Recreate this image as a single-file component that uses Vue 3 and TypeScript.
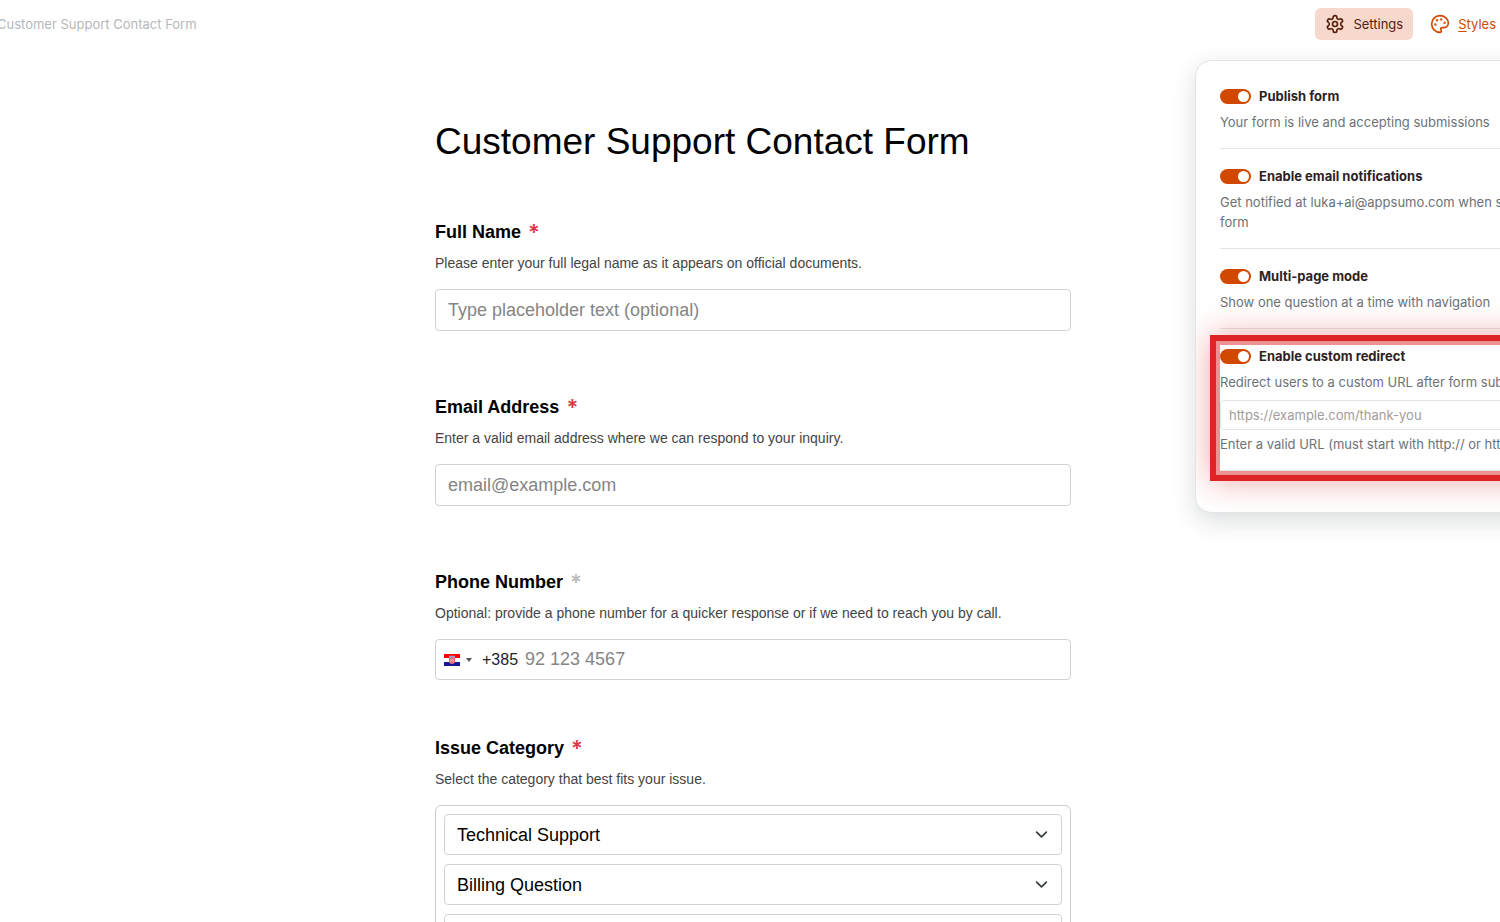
<script setup lang="ts">
import { ref } from 'vue'

interface TextField {
  id: string
  label: string
  hint: string
  placeholder: string
  type: string
}

interface Setting {
  id: string
  label: string
  hint: string
}

const title = 'Customer Support Contact Form'

const fields: TextField[] = [
  {
    id: 'full-name',
    label: 'Full Name',
    hint: 'Please enter your full legal name as it appears on official documents.',
    placeholder: 'Type placeholder text (optional)',
    type: 'text',
  },
  {
    id: 'email',
    label: 'Email Address',
    hint: 'Enter a valid email address where we can respond to your inquiry.',
    placeholder: 'email@example.com',
    type: 'email',
  },
]

const categories = ['Technical Support', 'Billing Question', 'Account Access']

const settings: Setting[] = [
  { id: 'publish', label: 'Publish form', hint: 'Your form is live and accepting submissions' },
  {
    id: 'notify',
    label: 'Enable email notifications',
    hint: 'Get notified at luka+ai@appsumo.com when someone submits your\nform',
  },
  { id: 'multipage', label: 'Multi-page mode', hint: 'Show one question at a time with navigation' },
]

const enabled = ref<Record<string, boolean>>({
  publish: true,
  notify: true,
  multipage: true,
  redirect: true,
})
const redirectUrl = ref('')
</script>

<template>
  <div class="shell">
    <header class="topbar">
      <span class="crumb">{{ title }}</span>
      <nav class="actions">
        <button type="button" class="action active">
          <svg class="icon" viewBox="0 0 24 24" aria-hidden="true">
            <path d="M12.22 2h-.44a2 2 0 0 0-2 2v.18a2 2 0 0 1-1 1.73l-.43.25a2 2 0 0 1-2 0l-.15-.08a2 2 0 0 0-2.73.73l-.22.38a2 2 0 0 0 .73 2.73l.15.1a2 2 0 0 1 1 1.72v.51a2 2 0 0 1-1 1.74l-.15.09a2 2 0 0 0-.73 2.73l.22.38a2 2 0 0 0 2.73.73l.15-.08a2 2 0 0 1 2 0l.43.25a2 2 0 0 1 1 1.73V20a2 2 0 0 0 2 2h.44a2 2 0 0 0 2-2v-.18a2 2 0 0 1 1-1.73l.43-.25a2 2 0 0 1 2 0l.15.08a2 2 0 0 0 2.73-.73l.22-.39a2 2 0 0 0-.73-2.73l-.15-.08a2 2 0 0 1-1-1.74v-.5a2 2 0 0 1 1-1.74l.15-.09a2 2 0 0 0 .73-2.73l-.22-.38a2 2 0 0 0-2.73-.73l-.15.08a2 2 0 0 1-2 0l-.43-.25a2 2 0 0 1-1-1.73V4a2 2 0 0 0-2-2z" />
            <circle cx="12" cy="12" r="3" />
          </svg>
          <span>Settings</span>
        </button>
        <button type="button" class="action">
          <svg class="icon" viewBox="0 0 24 24" aria-hidden="true">
            <path d="M12 2C6.5 2 2 6.5 2 12s4.5 10 10 10c.926 0 1.648-.746 1.648-1.688 0-.437-.18-.835-.437-1.125-.29-.289-.438-.652-.438-1.125a1.64 1.64 0 0 1 1.668-1.668h1.996c3.051 0 5.555-2.503 5.555-5.554C21.965 6.012 17.461 2 12 2z" />
            <circle class="dot" cx="13.5" cy="6.5" r=".5" />
            <circle class="dot" cx="17.5" cy="10.5" r=".5" />
            <circle class="dot" cx="8.5" cy="7.5" r=".5" />
            <circle class="dot" cx="6.5" cy="12.5" r=".5" />
          </svg>
          <span><u>S</u>tyles</span>
        </button>
      </nav>
    </header>

    <main class="form">
      <h1>{{ title }}</h1>

      <section v-for="f in fields" :key="f.id" class="field">
        <div class="caption">
          <label :for="f.id">{{ f.label }}</label>
          <span class="star">*</span>
        </div>
        <p class="hint">{{ f.hint }}</p>
        <input :id="f.id" class="box" :type="f.type" :placeholder="f.placeholder" />
      </section>

      <section class="field phone-field">
        <div class="caption">
          <label for="phone">Phone Number</label>
          <span class="star optional">*</span>
        </div>
        <p class="hint">Optional: provide a phone number for a quicker response or if we need to reach you by call.</p>
        <div class="phone">
          <button type="button" class="country" aria-label="Country">
            <svg class="flag" viewBox="0 0 16 12" aria-hidden="true">
              <rect width="16" height="4" fill="#f00" />
              <rect y="4" width="16" height="4" fill="#fff" />
              <rect y="8" width="16" height="4" fill="#171796" />
              <path d="M5 3h6v4.500q0 2-3 2.500q-3-.5-3-2.500z" fill="#e8707a" />
              <path d="M5 3h1v1h1V3h2v1h1V3h1v-1l-1-.5-1 .5-1-.5-1 .5-1-.5-1 .5z" fill="#8fa3d8" />
              <path d="M6 5h1v1H6zM8 5h1v1H8zM7 6h1v1H7zM9 6h1v1H9zM6 7h1v1H6zM8 7h1v1H8z" fill="#f3a5a8" />
            </svg>
            <svg class="caret" viewBox="0 0 6 4" aria-hidden="true"><path d="M0 0h6L3 4z" /></svg>
          </button>
          <span class="dial">+385</span>
          <input id="phone" type="tel" placeholder="92 123 4567" />
        </div>
      </section>

      <section class="field">
        <div class="caption">
          <span>Issue Category</span>
          <span class="star">*</span>
        </div>
        <p class="hint">Select the category that best fits your issue.</p>
        <div class="options">
          <div v-for="c in categories" :key="c" class="option">
            <select :aria-label="c">
              <option>{{ c }}</option>
            </select>
            <svg class="chevron" viewBox="0 0 16 16" aria-hidden="true"><path d="M2 5l6 6 6-6" /></svg>
          </div>
        </div>
      </section>
    </main>

    <aside class="panel">
      <section v-for="s in settings" :key="s.id" class="setting">
        <label class="switch-row">
          <input v-model="enabled[s.id]" type="checkbox" class="switch" />
          <span>{{ s.label }}</span>
        </label>
        <p>{{ s.hint }}</p>
      </section>
      <section class="setting highlighted">
        <label class="switch-row">
          <input v-model="enabled.redirect" type="checkbox" class="switch" />
          <span>Enable custom redirect</span>
        </label>
        <p>Redirect users to a custom URL after form submission</p>
        <input v-model="redirectUrl" class="url" type="url" aria-label="Redirect URL" placeholder="https://example.com/thank-you" />
        <p class="help">Enter a valid URL (must start with http:// or https://)</p>
      </section>
    </aside>
  </div>
</template>

<style>
html,
body {
  overflow: hidden;
  background: #fff;
}
</style>

<style scoped>
.shell {
  position: relative;
  margin: 0 -9px 0 -3px;
  font-family: Inter, "Liberation Sans", sans-serif;
  font-size: 13px;
  line-height: 20px;
}

.shell *,
.shell *::before,
.shell *::after {
  box-sizing: border-box;
}

.topbar {
  display: flex;
  align-items: center;
  justify-content: space-between;
  height: 48px;
  padding-right: 3px;
}

.crumb {
  color: #b5b8ba;
}

.actions {
  display: flex;
  gap: 7px;
}

.action {
  display: flex;
  align-items: center;
  gap: 8px;
  height: 32px;
  padding: 0 10px;
  border: 0;
  border-radius: 6px;
  background: none;
  color: #d14900;
  font: inherit;
  cursor: pointer;
}

.action.active {
  background: #f6d9cc;
  color: #56200a;
}

.action u {
  text-underline-offset: 2px;
}

.icon {
  width: 20px;
  height: 20px;
  fill: none;
  stroke: currentColor;
  stroke-width: 2;
  stroke-linecap: round;
  stroke-linejoin: round;
}

.dot {
  fill: currentColor;
}

.form {
  width: 636px;
  max-width: 100%;
  margin: 0 auto;
  padding-top: 72px;
  font-family: "Liberation Sans", Arial, sans-serif;
}

h1 {
  margin: 0 0 56px;
  color: #000;
  font-size: 37px;
  font-weight: 400;
  line-height: 44px;
}

.field {
  margin-bottom: 64px;
}

.phone-field {
  margin-bottom: 56px;
}

.caption {
  display: flex;
  gap: 7px;
  color: #000;
  font-size: 18px;
  font-weight: 700;
  line-height: 24px;
}

.star {
  color: #dc3545;
  font-family: Inter, sans-serif;
  font-size: 22px;
  font-weight: 600;
}

.star.optional {
  color: #bbb;
}

.hint {
  margin: 9px 0 16px;
  color: #444;
  font-size: 14px;
  line-height: 20px;
}

.box,
.phone,
.options,
.option select {
  width: 100%;
  border: 1px solid #ced4da;
  border-radius: 4px;
  background: #fff;
}

.box {
  display: block;
  height: 42px;
  padding: 0 12px;
  font-family: inherit;
  font-size: 18px;
}

.box::placeholder,
.phone input::placeholder {
  color: #858585;
  opacity: 1;
}

.phone {
  display: flex;
  align-items: center;
  height: 41px;
  padding: 0 8px;
}

.country {
  display: flex;
  align-items: center;
  gap: 6px;
  padding: 0;
  border: 0;
  background: none;
}

.flag {
  width: 16px;
  height: 12px;
}

.caret {
  width: 6px;
  height: 4px;
  fill: #555;
}

.dial {
  margin: 0 7px 0 10px;
  color: #212529;
  font-size: 16px;
}

.phone input {
  flex: 1;
  min-width: 0;
  height: 100%;
  padding: 0;
  border: 0;
  background: none;
  font-family: inherit;
  font-size: 18px;
}

.options {
  display: grid;
  gap: 9px;
  padding: 8px;
  border-color: #c8cbd0;
  border-radius: 6px;
}

.option {
  position: relative;
}

.option select {
  display: block;
  height: 41px;
  padding: 0 12px;
  appearance: none;
  color: #000;
  font-family: inherit;
  font-size: 18px;
}

.chevron {
  position: absolute;
  top: 14px;
  right: 14px;
  width: 13px;
  height: 13px;
  fill: none;
  stroke: #343a40;
  stroke-width: 2;
  stroke-linecap: round;
  stroke-linejoin: round;
  pointer-events: none;
}

.panel {
  position: absolute;
  top: 60px;
  right: -166px;
  width: 480px;
  padding: 25px 24px 24px;
  overflow: hidden;
  border: 1px solid #e2e4e5;
  border-radius: 16px;
  background: #fff;
  box-shadow: 0 8px 24px rgba(33, 45, 50, 0.16);
}

.setting {
  margin-bottom: 17px;
  padding-bottom: 16px;
  border-bottom: 1px solid #e2e4e5;
}

.switch-row {
  display: flex;
  align-items: center;
  gap: 8px;
  color: #2e1f24;
  font-weight: 700;
}

.switch {
  display: flex;
  align-items: center;
  justify-content: flex-end;
  width: 31px;
  height: 15px;
  margin: 0;
  padding: 0 2px;
  appearance: none;
  border-radius: 8px;
  background: #d14900;
}

.switch:not(:checked) {
  justify-content: flex-start;
  background: #bbb;
}

.switch::before {
  width: 11px;
  height: 11px;
  border-radius: 50%;
  background: #fff;
  content: "";
}

.setting p {
  margin: 6px 0 0;
  color: #6c7278;
  white-space: pre-line;
}

.highlighted {
  position: relative;
}

.highlighted::after {
  position: absolute;
  inset: -11px -10px -11px;
  border: 6px solid #dc2626;
  box-shadow: 0 0 30px rgba(220, 38, 38, 0.4), inset 0 0 0 4px rgba(220, 38, 38, 0.5);
  content: "";
  pointer-events: none;
}

.url {
  display: block;
  width: 100%;
  height: 30px;
  margin-top: 8px;
  padding: 0 8px;
  border: 1px solid #e2e4e5;
  border-radius: 4px;
  background: #fff;
  font: inherit;
}

.url::placeholder {
  color: #a29c9c;
  opacity: 1;
}

.setting .help {
  margin-top: 4px;
}
</style>
